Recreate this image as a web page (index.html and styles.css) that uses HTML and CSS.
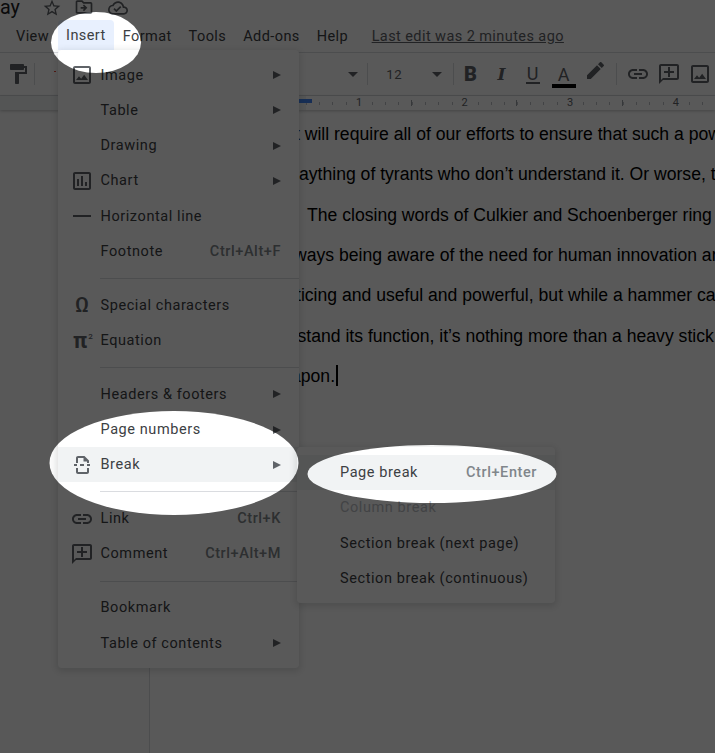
FILE: index.html
```html
<!DOCTYPE html>
<html>
<head>
    <title>Essay - Google Docs</title>
    <meta http-equiv="content-type" content="text/html; charset=UTF-8"/>
    <link rel="stylesheet" href="styles.css">
</head>
<body>
<div class="app">
    <div class="title-row">
        <span class="doc-title">ay</span>
        <svg class="title-icon star" viewBox="0 0 24 24"><path d="M22 9.24l-7.19-.62L12 2 9.19 8.63 2 9.24l5.46 4.73L5.82 21 12 17.27 18.18 21l-1.63-7.03L22 9.24zM12 15.4l-3.76 2.27 1-4.28-3.32-2.88 4.38-.38L12 6.1l1.71 4.04 4.38.38-3.32 2.88 1 4.28L12 15.4z"/></svg>
        <svg class="title-icon folder" viewBox="0 0 24 24"><path d="M20 6h-8l-2-2H4c-1.11 0-1.99.89-1.99 2L2 18c0 1.11.89 2 2 2h16c1.11 0 2-.89 2-2V8c0-1.11-.89-2-2-2zm0 12H4V6h5.17l2 2H20v10z"/><path d="M12.16 12H8v2h4.16l-1.59 1.59L12 17l4-4-4-4-1.41 1.41z"/></svg>
        <svg class="title-icon cloud" viewBox="0 0 24 24"><path d="M19.35 10.04C18.67 6.59 15.64 4 12 4 9.11 4 6.6 5.64 5.35 8.04 2.34 8.36 0 10.91 0 14c0 3.31 2.69 6 6 6h13c2.76 0 5-2.24 5-5 0-2.64-2.05-4.78-4.65-4.96zM19 18H6c-2.21 0-4-1.79-4-4 0-2.05 1.53-3.76 3.56-3.97l1.07-.11.5-.95C8.08 7.14 9.94 6 12 6c2.62 0 4.88 1.86 5.39 4.43l.3 1.5 1.53.11c1.56.1 2.78 1.41 2.78 2.96 0 1.65-1.35 3-3 3zm-9-3.82l-2.09-2.09L6.5 13.5 10 17l6.01-6.01-1.41-1.41z"/></svg>
    </div>

    <div class="menubar">
        <span class="menubar-item">View</span>
        <span class="menubar-item menubar-open">Insert</span>
        <span class="menubar-item">Format</span>
        <span class="menubar-item">Tools</span>
        <span class="menubar-item">Add-ons</span>
        <span class="menubar-item">Help</span>
        <span class="last-edit">Last edit was 2 minutes ago</span>
    </div>

    <div class="toolbar">
        <div class="tool-left">
            <span class="tool"><svg class="tool-icon" viewBox="0 0 24 24"><path d="M18 4V3c0-.55-.45-1-1-1H5c-.55 0-1 .45-1 1v4c0 .55.45 1 1 1h12c.55 0 1-.45 1-1V6h1v4H9v11c0 .55.45 1 1 1h2c.55 0 1-.45 1-1v-9h8V4h-3z"/></svg></span>
            <span class="tool-divider"></span>
            <span class="spell-mark"></span>
        </div>
        <span class="caret"></span>
        <span class="tool-divider first-divider"></span>
        <div class="size-select"><span class="size-value">12</span><span class="caret"></span></div>
        <span class="tool-divider"></span>
        <div class="tool-group">
            <span class="tool glyph-bold">B</span>
            <span class="tool glyph-italic">I</span>
            <span class="tool"><span class="glyph-under">U</span></span>
            <span class="tool"><span class="glyph-color">A</span></span>
            <span class="tool"><svg class="tool-icon" viewBox="0 0 24 24"><path d="M17.75 7L14 3.25l-10 10V17h3.75l10-10zm2.96-2.96c.39-.39.39-1.02 0-1.41L18.37.29a.9959.9959 0 0 0-1.41 0L15 2.25 18.75 6l1.96-1.96z"/></svg></span>
        </div>
        <span class="tool-divider insert-divider"></span>
        <div class="tool-group">
            <span class="tool"><svg class="tool-icon" viewBox="0 0 24 24"><path d="M3.9 12c0-1.71 1.39-3.1 3.1-3.1h4V7H7c-2.76 0-5 2.24-5 5s2.24 5 5 5h4v-1.9H7c-1.71 0-3.1-1.39-3.1-3.1zM8 13h8v-2H8v2zm9-6h-4v1.9h4c1.71 0 3.1 1.39 3.1 3.1s-1.39 3.1-3.1 3.1h-4V17h4c2.76 0 5-2.24 5-5s-2.24-5-5-5z"/></svg></span>
            <span class="tool"><svg class="tool-icon" viewBox="0 0 24 24"><path d="M20 2H4c-1.1 0-2 .9-2 2v18l4-4h14c1.1 0 2-.9 2-2V4c0-1.1-.9-2-2-2zm0 14H6l-2 2V4h16v12z"/><path d="M11 5h2v4h4v2h-4v4h-2v-4H7V9h4z"/></svg></span>
            <span class="tool"><svg class="tool-icon" viewBox="0 0 24 24"><path d="M19 5v14H5V5h14m0-2H5c-1.1 0-2 .9-2 2v14c0 1.1.9 2 2 2h14c1.1 0 2-.9 2-2V5c0-1.1-.9-2-2-2zm-4.86 8.86l-3 3.87L9 13.14 6 17h12l-3.86-5.14z"/></svg></span>
        </div>
    </div>

    <div class="ruler">
        <span class="ruler-margin"></span>
        <span class="ruler-inch">1</span>
        <span class="ruler-inch">2</span>
        <span class="ruler-inch">3</span>
        <span class="ruler-inch">4</span>
    </div>

    <div class="workspace">
        <div class="gutter"></div>
        <div class="page">
            <p class="line line-1">it will require all of our efforts to ensure that such a power does not</p>
            <p class="line line-2">aything of tyrants who don’t understand it. Or worse, that</p>
            <p class="line line-3">The closing words of Culkier and Schoenberger ring true</p>
            <p class="line line-4">ways being aware of the need for human innovation and</p>
            <p class="line line-5">ticing and useful and powerful, but while a hammer can</p>
            <p class="line line-6">stand its function, it’s nothing more than a heavy stick</p>
            <p class="line line-7">apon.<span class="text-cursor"></span></p>
        </div>
    </div>
</div>

<div class="menu insert-menu">
    <div class="menu-row">
        <svg class="menu-icon" viewBox="0 0 24 24"><path d="M19 5v14H5V5h14m0-2H5c-1.1 0-2 .9-2 2v14c0 1.1.9 2 2 2h14c1.1 0 2-.9 2-2V5c0-1.1-.9-2-2-2zm-4.86 8.86l-3 3.87L9 13.14 6 17h12l-3.86-5.14z"/></svg>
        <span class="menu-label">Image</span><span class="arrow"></span>
    </div>
    <div class="menu-row"><span class="menu-label">Table</span><span class="arrow"></span></div>
    <div class="menu-row"><span class="menu-label">Drawing</span><span class="arrow"></span></div>
    <div class="menu-row">
        <svg class="menu-icon" viewBox="0 0 24 24"><path d="M19 3H5c-1.1 0-2 .9-2 2v14c0 1.1.9 2 2 2h14c1.1 0 2-.9 2-2V5c0-1.1-.9-2-2-2zm0 16H5V5h14v14zM7 10h2v7H7zm4-3h2v10h-2zm4 6h2v4h-2z"/></svg>
        <span class="menu-label">Chart</span><span class="arrow"></span>
    </div>
    <div class="menu-row">
        <svg class="menu-icon" viewBox="0 0 24 24"><path d="M3 11h18v2H3z"/></svg>
        <span class="menu-label">Horizontal line</span>
    </div>
    <div class="menu-row"><span class="menu-label">Footnote</span><span class="shortcut">Ctrl+Alt+F</span></div>
    <div class="menu-sep"></div>
    <div class="menu-row"><span class="glyph-icon omega">Ω</span><span class="menu-label">Special characters</span></div>
    <div class="menu-row"><span class="glyph-icon pi">π<sup>2</sup></span><span class="menu-label">Equation</span></div>
    <div class="menu-sep"></div>
    <div class="menu-row"><span class="menu-label">Headers &amp; footers</span><span class="arrow"></span></div>
    <div class="menu-row"><span class="menu-label">Page numbers</span><span class="arrow"></span></div>
    <div class="menu-row menu-row-active">
        <svg class="menu-icon" viewBox="0 0 24 24"><path d="M6 10V5c0-1.1.9-2 2-2h6.5L19 7.5V10h-2V8.5h-3.5V5H8v5zM4 11h3v2H4zm6 0h4v2h-4zm7 0h3v2h-3zM6 15h2v4h9v-4h2v4c0 1.1-.9 2-2 2H8c-1.1 0-2-.9-2-2z"/></svg>
        <span class="menu-label">Break</span><span class="arrow"></span>
    </div>
    <div class="menu-sep"></div>
    <div class="menu-row">
        <svg class="menu-icon" viewBox="0 0 24 24"><path d="M3.9 12c0-1.71 1.39-3.1 3.1-3.1h4V7H7c-2.76 0-5 2.24-5 5s2.24 5 5 5h4v-1.9H7c-1.71 0-3.1-1.39-3.1-3.1zM8 13h8v-2H8v2zm9-6h-4v1.9h4c1.71 0 3.1 1.39 3.1 3.1s-1.39 3.1-3.1 3.1h-4V17h4c2.76 0 5-2.24 5-5s-2.24-5-5-5z"/></svg>
        <span class="menu-label">Link</span><span class="shortcut">Ctrl+K</span>
    </div>
    <div class="menu-row">
        <svg class="menu-icon" viewBox="0 0 24 24"><path d="M20 2H4c-1.1 0-2 .9-2 2v18l4-4h14c1.1 0 2-.9 2-2V4c0-1.1-.9-2-2-2zm0 14H6l-2 2V4h16v12z"/><path d="M11 5h2v4h4v2h-4v4h-2v-4H7V9h4z"/></svg>
        <span class="menu-label">Comment</span><span class="shortcut">Ctrl+Alt+M</span>
    </div>
    <div class="menu-sep"></div>
    <div class="menu-row"><span class="menu-label">Bookmark</span></div>
    <div class="menu-row"><span class="menu-label">Table of contents</span><span class="arrow"></span></div>
</div>

<div class="menu break-menu">
    <div class="menu-row menu-row-active"><span class="menu-label">Page break</span><span class="shortcut">Ctrl+Enter</span></div>
    <div class="menu-row"><span class="menu-label menu-label-disabled">Column break</span></div>
    <div class="menu-row"><span class="menu-label">Section break (next page)</span></div>
    <div class="menu-row"><span class="menu-label">Section break (continuous)</span></div>
</div>

<!-- dim layer, the ellipses are the three bright callouts -->
<svg class="dimmer" width="715" height="753" viewBox="0 0 715 753">
    <mask id="callouts">
        <rect width="715" height="753" fill="#fff"/>
        <ellipse cx="96" cy="42.5" rx="45" ry="30.5" fill="#000"/>
        <ellipse cx="174" cy="463" rx="124.5" ry="52" fill="#000"/>
        <ellipse cx="432" cy="474" rx="124.5" ry="29" fill="#000"/>
    </mask>
    <rect width="715" height="753" fill="#000" fill-opacity="0.65" mask="url(#callouts)"/>
</svg>
</body>
</html>
```

FILE: styles.css
```css
html {
    height: 100%;
}

body {
    position: relative;
    height: 100%;
    margin: 0;
    overflow: hidden;
    background-color: #fff;
    color: #3c4043;
    font-family: Roboto, "Liberation Sans", sans-serif;
    font-size: 14.5px;
    letter-spacing: 0.58px;
}

svg {
    fill: currentColor;
}

.app {
    display: flex;
    flex-direction: column;
    height: 753px;
}

/* title row, cut off by the top of the picture */
.title-row {
    display: flex;
    align-items: center;
    flex: none;
    height: 20px;
    overflow: hidden;
    color: #5f6368;
}

.doc-title {
    width: 42px;
    color: #202124;
    font-size: 19.8px;
    letter-spacing: 0;
    margin-top: -6px;
}

.title-icon {
    flex: none;
    width: 20px;
    height: 20px;
}

.star {
    margin-top: -4px;
}

.folder {
    margin: -7px 0 0 12px;
}

.cloud {
    margin: -4px 0 0 14px;
}

.menubar {
    display: flex;
    align-items: center;
    flex: none;
    height: 32px;
    padding-left: 7.5px;
    border-bottom: 1px solid #dadce0;
    letter-spacing: 0.42px;
}

.menubar-item {
    display: flex;
    align-items: center;
    height: 100%;
    padding: 0 8.5px;
}

.menubar-open {
    background-color: #e8f0fe;
    border-radius: 4px 4px 0 0;
    height: 30px;
    margin-bottom: 2px;
}

.last-edit {
    margin-left: 15px;
    color: #5f6368;
    text-decoration: underline;
}

.toolbar {
    display: flex;
    align-items: center;
    flex: none;
    height: 42px;
    border-bottom: 1px solid #dadce0;
    color: #5f6368;
    overflow: hidden;
}

.tool-left {
    display: flex;
    align-items: center;
    width: 350px;
    padding-left: 2px;
    box-sizing: border-box;
}

.tool-group {
    display: flex;
}

.tool {
    display: flex;
    align-items: center;
    justify-content: center;
    flex: none;
    width: 31px;
    height: 28px;
}

.tool-icon {
    flex: none;
    width: 24px;
    height: 24px;
}

.tool-divider {
    flex: none;
    width: 1px;
    height: 22px;
    margin: 0 1px;
    background-color: #dadce0;
}

.first-divider {
    margin-left: 9px;
}

.insert-divider {
    margin: 0 5px 0 6px;
}

.spell-mark {
    width: 2px;
    height: 1px;
    margin-left: 18px;
    margin-top: -6px;
    background-color: #ea4335;
}

.caret {
    flex: none;
    width: 0;
    height: 0;
    border: 5px solid transparent;
    border-top-color: #5f6368;
    border-bottom: 0;
}

.size-select {
    display: flex;
    align-items: center;
    width: 83px;
    box-sizing: border-box;
    padding-left: 17px;
    color: #5f6368;
}

.size-value {
    width: 46px;
    font-size: 13.2px;
}

.glyph-bold {
    font-size: 20px;
    font-weight: 900;
    letter-spacing: 0;
}

.glyph-italic {
    font-family: "DejaVu Serif", serif;
    font-size: 17px;
    font-style: italic;
    font-weight: 700;
    letter-spacing: 0;
}

.glyph-under {
    display: block;
    width: 14px;
    font-size: 18px;
    line-height: 17px;
    letter-spacing: 0;
    text-align: center;
    border-bottom: 2px solid #5f6368;
}

.glyph-color {
    display: block;
    width: 24px;
    font-size: 18px;
    line-height: 19px;
    letter-spacing: 0;
    text-align: center;
    border-bottom: 4px solid #000;
    margin: 4px 0 0 0;
}

.ruler {
    display: flex;
    flex: none;
    height: 14px;
    color: #5f6368;
    font-size: 11px;
    line-height: 14px;
    letter-spacing: 0;
    background-color: #f1f3f4;
    box-shadow: 0 1px 3px rgba(60, 64, 67, .3);
    position: relative;
}

.ruler-margin {
    width: 306.2px;
    flex: none;
    position: relative;
}

.ruler-margin::after {
    content: "";
    position: absolute;
    right: -6px;
    top: 3px;
    width: 13px;
    height: 4px;
    background-color: #4285f4;
}

.ruler-inch {
    flex: none;
    width: 105.6px;
    text-align: center;
    background-color: #fff;
    background-image:
        linear-gradient(#fff, #fff),
        linear-gradient(#9aa0a6, #9aa0a6),
        repeating-linear-gradient(90deg, #bdc1c6 0 1px, transparent 1px 13.2px);
    background-repeat: no-repeat;
    background-size: 14px 14px, 1px 6px, 100% 3px;
    background-position: center center, right 4px, 0 6px;
}

.workspace {
    display: flex;
    flex: 1;
    min-height: 0;
    background-color: #fcfcfc;
}

.gutter {
    flex: none;
    width: 149px;
}

.page {
    flex: 1;
    min-width: 0;
    padding-top: 4px;
    background-color: #fff;
    border-left: 1px solid #dadce0;
    overflow: hidden;
    color: #000;
    font-family: "Liberation Sans", Arial, sans-serif;
    font-size: 17.6px;
    letter-spacing: 0;
}

.line {
    margin: 0;
    height: 40.35px;
    line-height: 40.35px;
    white-space: nowrap;
}

.line-1 { padding-left: 141px; }
.line-2 { padding-left: 149px; }
.line-3 { padding-left: 157px; }
.line-4 { padding-left: 144px; }
.line-5 { padding-left: 146px; }
.line-6 { padding-left: 147.5px; }
.line-7 { padding-left: 141px; }

.text-cursor {
    display: inline-block;
    width: 2px;
    height: 21px;
    margin-left: 1px;
    vertical-align: -4px;
    background-color: #000;
}

/* dropdowns */
.menu {
    position: absolute;
    box-sizing: border-box;
    background-color: #fff;
    border-radius: 4px;
    box-shadow: 0 2px 6px 2px rgba(60, 64, 67, .15);
}

.insert-menu {
    left: 58px;
    top: 50px;
    width: 241px;
    height: 618px;
    padding-top: 7.4px;
}

.break-menu {
    left: 297px;
    top: 447px;
    width: 258px;
    height: 156px;
    padding-top: 8px;
}

.menu-row {
    display: flex;
    align-items: center;
    height: 35.25px;
    padding: 0 18px 0 42.5px;
    position: relative;
}

.break-menu .menu-row {
    padding-left: 43px;
}

.menu-row-active {
    background-color: #f1f3f4;
}

.menu-label {
    flex: 1;
    white-space: nowrap;
}

.menu-label-disabled {
    color: #bdc1c6;
}

.menu-icon {
    position: absolute;
    left: 12px;
    top: 5.6px;
    width: 24px;
    height: 24px;
    color: #5f6368;
}

.glyph-icon {
    position: absolute;
    left: 12px;
    top: 0;
    width: 24px;
    line-height: 35px;
    color: #5f6368;
    letter-spacing: 0;
    text-align: center;
}

.omega {
    font-size: 21px;
    font-weight: 500;
}

.pi {
    font-size: 22px;
    font-weight: 700;
    text-align: left;
    padding-left: 3px;
}

.pi sup {
    font-size: 8px;
    font-weight: 500;
    line-height: 0;
    margin-left: 1px;
}

.shortcut {
    color: #80868b;
    font-weight: 500;
}

.arrow {
    flex: none;
    width: 0;
    height: 0;
    border-style: solid;
    border-width: 4px 0 4px 8px;
    border-color: transparent transparent transparent #5f6368;
}

.menu-sep {
    height: 1px;
    margin: 9px 0 8.65px 42px;
    background-color: #dadce0;
}

.dimmer {
    position: absolute;
    left: 0;
    top: 0;
    pointer-events: none;
}
```
